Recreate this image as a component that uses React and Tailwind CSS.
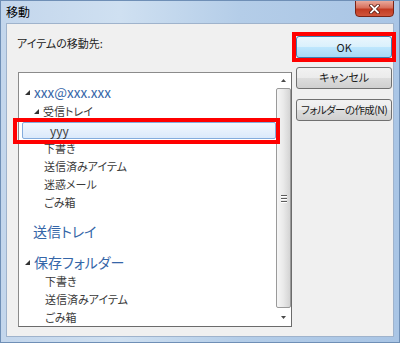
import React from 'react';

const jp = "font-['Noto_Sans_CJK_JP','Noto_Sans',sans-serif] [font-feature-settings:'palt']";

const Expander = () => (
  <svg width="5" height="5" viewBox="0 0 5 5" className="shrink-0">
    <polygon points="5,0 5,5 0,5" fill="#333333" />
  </svg>
);

const Row = ({ h, indent, expander, blue, big, children, className = '' }) => (
  <div className={`flex items-center ${h} ${className}`} style={{ paddingLeft: indent }}>
    {expander && <div className="w-[9px] flex"><Expander /></div>}
    <span
      className={`whitespace-nowrap leading-none ${blue ? 'text-[#3566a8]' : 'text-[#3a3a3a]'} ${
        big ? 'text-[14px]' : 'text-[11px]'
      }`}
    >
      {children}
    </span>
  </div>
);

const Button = ({ children, primary, className = '' }) => (
  <button
    className={`h-[22px] w-full rounded-[3px] border font-normal text-[#1b1b1b] leading-none whitespace-nowrap ${className} ${
      primary
        ? 'border-[#3c7fb1] bg-[linear-gradient(#eaf6fd_0%,#d9f0fc_50%,#bee6fd_51%,#a7d9f5_100%)]'
        : 'border-[#707070] bg-[linear-gradient(#f2f2f2_0%,#ebebeb_50%,#dddddd_51%,#cfcfcf_100%)]'
    }`}
  >
    {children}
  </button>
);

const App = () => {
  return (
    <div className={`relative w-[400px] h-[343px] overflow-hidden ${jp} bg-[linear-gradient(90deg,#c3d6ec_0%,#cfe0f1_30%,#b4cde8_60%,#a9c5e5_100%)] border border-[#6f8fb6] flex flex-col`}>
      {/* Title bar */}
      <div className="h-[22px] flex items-start justify-between shrink-0">
        <span className="pl-[5px] pt-[5px] text-[12px] leading-none text-black">移動</span>
        <div className="mr-[5px] w-[39px] h-[17px] -mt-px rounded-b-[4px] border border-[#7a2416] bg-[linear-gradient(#e9a99b_0%,#d7705c_45%,#c23b22_55%,#d0553b_100%)] flex items-center justify-center">
          <svg width="11" height="10" viewBox="0 0 11 10">
            <path d="M2 1.5 L9 8.5 M9 1.5 L2 8.5" stroke="#5a1a10" strokeWidth="3.4" strokeLinecap="square" />
            <path d="M2 1.5 L9 8.5 M9 1.5 L2 8.5" stroke="#ffffff" strokeWidth="1.8" strokeLinecap="square" />
          </svg>
        </div>
      </div>

      {/* Content panel */}
      <div className="mx-[5px] mb-[8px] flex-1 bg-[#f0f0f0] border border-[#9fb3cc] flex gap-[4px] pt-[12px] pl-[10px] pr-[1px] pb-[9px]">
        {/* Left column */}
        <div className="flex flex-col w-[276px]">
          <div className="h-[14px] flex items-center text-[11px] text-[#1e1e1e] leading-none">アイテムの移動先:</div>
          <div className="mt-[22px] ml-px flex-1 bg-white border border-[#6b6b6b] border-t-[#8b8b8b] border-l-[#8b8b8b] flex overflow-hidden">
            <div className="flex-1 pt-[10px] flex flex-col min-w-0">
              <Row h="h-[19px]" indent={6} expander blue big>
                <span className="text-[13.5px]">xxx@xxx.xxx</span>
              </Row>
              <Row h="h-[19px]" indent={15} expander>受信トレイ</Row>
              <div className="mt-px ml-[3px] h-[17px] rounded-[2px] border border-[#84acdd] bg-[linear-gradient(#f1f7fe,#dbe9fb)] flex items-center pl-[27px]">
                <span className="text-[12px] leading-none text-[#3a3a3a]">yyy</span>
              </div>
              <Row h="h-[18px]" indent={25}>下書き</Row>
              <Row h="h-[18px]" indent={25}>送信済みアイテム</Row>
              <Row h="h-[18px]" indent={25}>迷惑メール</Row>
              <Row h="h-[18px]" indent={25}>ごみ箱</Row>
              <Row h="h-[20px]" indent={14} blue big className="mt-[10px]">送信トレイ</Row>
              <Row h="h-[20px]" indent={6} expander blue big className="mt-[11px]">保存フォルダー</Row>
              <Row h="h-[18px]" indent={26}>下書き</Row>
              <Row h="h-[18px]" indent={26}>送信済みアイテム</Row>
              <Row h="h-[18px]" indent={26}>ごみ箱</Row>
            </div>

            {/* Scrollbar */}
            <div className="w-[15px] shrink-0 flex flex-col">
              <div className="h-[14px] flex items-center justify-center">
                <svg width="5" height="3" viewBox="0 0 5 3"><polygon points="2.5,0 5,3 0,3" fill="#4a4a4a" /></svg>
              </div>
              <div className="flex-1 my-[1px] rounded-[2px] border border-[#9a9a9a] bg-[linear-gradient(90deg,#f6f6f6_0%,#e9e9e9_50%,#d4d4d4_100%)] flex items-center justify-center">
                <div className="flex flex-col gap-[1px]">
                  <div className="w-[6px] h-[1px] bg-[#5c5c5c] shadow-[0_1px_0_#ffffff]" />
                  <div className="w-[6px] h-[1px] bg-[#5c5c5c] mt-[1px] shadow-[0_1px_0_#ffffff]" />
                  <div className="w-[6px] h-[1px] bg-[#5c5c5c] mt-[1px] shadow-[0_1px_0_#ffffff]" />
                </div>
              </div>
              <div className="h-[17px] flex items-center justify-center">
                <svg width="5" height="3" viewBox="0 0 5 3"><polygon points="0,0 5,0 2.5,3" fill="#4a4a4a" /></svg>
              </div>
            </div>
          </div>
        </div>

        {/* Right column */}
        <div className="flex flex-col w-[96px]">
          <Button primary className="text-[11px]">OK</Button>
          <div className="mt-[5px]"><Button className="text-[11px]">キャンセル</Button></div>
          <div className="mt-[6px]"><Button className="text-[10.5px] tracking-[-0.6px]">フォルダーの作成(N)</Button></div>
        </div>
      </div>

      {/* Annotation highlights */}
      <div className="absolute left-[12px] top-[117px] w-[267px] h-[26px] border-[4px] border-[#ff0000] pointer-events-none" />
      <div className="absolute left-[291px] top-[31px] w-[104px] h-[30px] border-[4px] border-[#ff0000] pointer-events-none" />
    </div>
  );
};

export default App;
